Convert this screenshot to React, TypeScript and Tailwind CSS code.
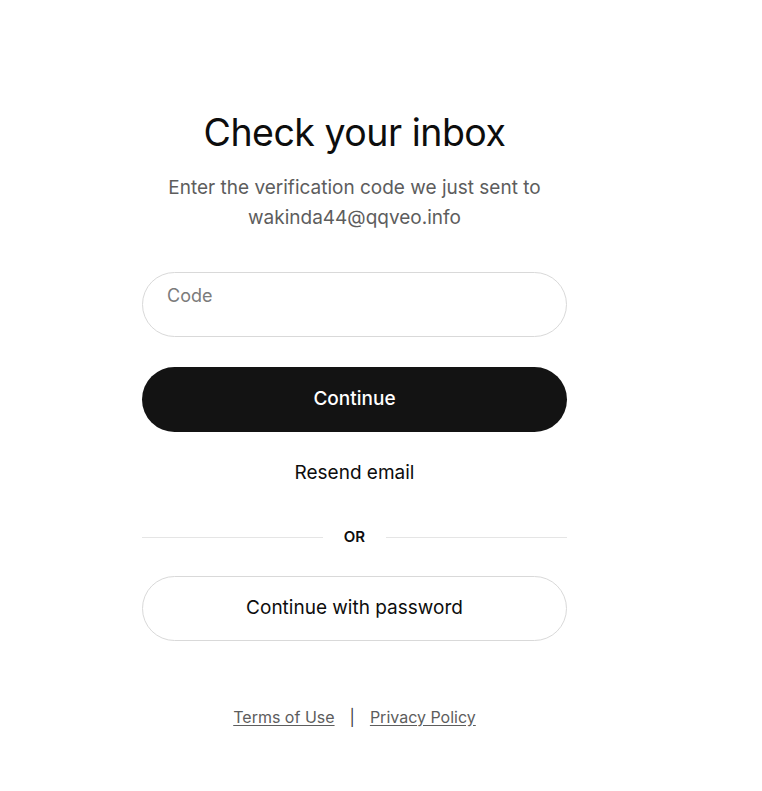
const font = "font-['Inter','Noto_Sans',sans-serif]"

function OrDivider() {
  return (
    <div className="flex items-center">
      <div className="h-px flex-1 bg-[#e5e5e5]" />
      <span className="px-[21px] text-[15px] font-semibold text-[#0d0d0d]">OR</span>
      <div className="h-px flex-1 bg-[#e5e5e5]" />
    </div>
  )
}

export default function App() {
  return (
    <div className={`min-h-[791px] bg-white pl-[142px] pt-[108px] ${font}`}>
      <div className="flex w-[425px] flex-col">
        <h1 className="text-center text-[37.5px] leading-[50px] font-normal tracking-[-0.5px] text-[#0d0d0d]">
          Check your inbox
        </h1>
        <p className="mt-[15px] text-center text-[19px] leading-[30px] text-[#5d5d5d]">
          Enter the verification code we just sent to
          <br />
          wakinda44@qqveo.info
        </p>

        <div className="mt-[39px] h-[65px] rounded-full border border-[#d9d9d9] px-[24px] pt-[9px]">
          <input
            placeholder="Code"
            className="w-full bg-transparent text-[18px] text-[#0d0d0d] outline-none placeholder:text-[#7b7b7b]"
          />
        </div>

        <button className="mt-[30px] flex h-[65px] items-center justify-center rounded-full bg-[#131313] text-[19px] font-medium text-white">
          Continue
        </button>

        <button className="mt-[26px] text-[19px] leading-[30px] text-[#0d0d0d]">Resend email</button>

        <div className="mt-[38px]">
          <OrDivider />
        </div>

        <button className="mt-[27px] flex h-[65px] items-center justify-center rounded-full border border-[#d9d9d9] bg-white text-[19px] text-[#0d0d0d]">
          Continue with password
        </button>

        <div className="mt-[64px] flex items-center justify-center gap-[15px] text-[16px] text-[#5d5d5d]">
          <a className="underline underline-offset-2">Terms of Use</a>
          <span className="text-[#3c3c3c]">|</span>
          <a className="underline underline-offset-2">Privacy Policy</a>
        </div>
      </div>
    </div>
  )
}
